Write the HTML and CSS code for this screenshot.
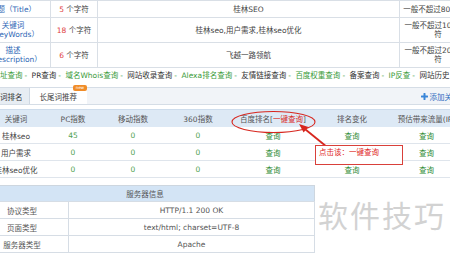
FILE: index.html
```html
<!DOCTYPE html>
<html lang="zh-CN">
<head>
    <meta charset="UTF-8" />
    <meta name="viewport" content="width=device-width, initial-scale=1.0" />
    <title>SEO综合查询</title>
    <link rel="stylesheet" href="styles.css">
</head>
<body>
    <div class="screen">
        <div class="page">
            <table class="meta">
                <colgroup>
                    <col style="width:75px"><col style="width:47px"><col style="width:302px"><col style="width:77px">
                </colgroup>
                <tr class="one">
                    <th>标题（Title）</th>
                    <td><em>5</em> 个字符</td>
                    <td>桂林SEO</td>
                    <td class="limit">一般不超过80个字符</td>
                </tr>
                <tr class="two">
                    <th>关键词<br>（KeyWords）</th>
                    <td><em>18</em> 个字符</td>
                    <td>桂林seo,用户需求,桂林seo优化</td>
                    <td class="limit">一般不超过100个字<br>符</td>
                </tr>
                <tr class="two">
                    <th>描述<br>（Description）</th>
                    <td><em>6</em> 个字符</td>
                    <td>飞越一路领航</td>
                    <td class="limit">一般不超过200个字<br>符</td>
                </tr>
            </table>

            <div class="links">
                <a class="green">地址查询</a><span class="sep">-</span>
                <a>PR查询</a><span class="sep">-</span>
                <a class="green">域名Whois查询</a><span class="sep">-</span>
                <a>网站收录查询</a><span class="sep">-</span>
                <a class="green">Alexa排名查询</a><span class="sep">-</span>
                <a>友情链接查询</a><span class="sep">-</span>
                <a class="green">百度权重查询</a><span class="sep">-</span>
                <a>备案查询</a><span class="sep">-</span>
                <a class="green">IP反查</a><span class="sep">-</span>
                <a>网站历史</a>
            </div>

            <div class="tabs">
                <span class="tab active">关键词排名</span>
                <span class="tab">长尾词推荐<i class="badge">new</i></span>
                <a class="add">
                    <svg width="7" height="7" viewBox="0 0 7 7"><path d="M3.5 0.8v5.4M0.8 3.5h5.4" stroke="#3a86d8" stroke-width="2" stroke-linecap="round"/></svg>添加关键词
                </a>
            </div>

            <table class="rank">
                <colgroup>
                    <col style="width:82px"><col style="width:32px"><col style="width:88px"><col style="width:42px"><col style="width:108px"><col style="width:50px"><col style="width:99px">
                </colgroup>
                <tr>
                    <th>关键词</th>
                    <th>PC指数</th>
                    <th>移动指数</th>
                    <th>360指数</th>
                    <th>百度排名[<span class="red">一键查询</span>]</th>
                    <th>排名变化</th>
                    <th>预估带来流量(IP)</th>
                </tr>
                <tr>
                    <td class="kw">桂林seo</td><td class="num">45</td><td class="num">0</td><td class="num">0</td>
                    <td class="q">查询</td><td class="q">查询</td><td class="q">查询</td>
                </tr>
                <tr>
                    <td class="kw">用户需求</td><td class="num">0</td><td class="num">0</td><td class="num">0</td>
                    <td class="q">查询</td><td class="q">查询</td><td class="q">查询</td>
                </tr>
                <tr>
                    <td class="kw">桂林seo优化</td><td class="num">0</td><td class="num">0</td><td class="num">0</td>
                    <td class="q">查询</td><td class="q">查询</td><td class="q">查询</td>
                </tr>
            </table>

            <table class="server">
                <colgroup>
                    <col style="width:93px"><col style="width:246px">
                </colgroup>
                <tr><th colspan="2">服务器信息</th></tr>
                <tr><td>协议类型</td><td>HTTP/1.1 200 OK</td></tr>
                <tr><td>页面类型</td><td>text/html; charset=UTF-8</td></tr>
                <tr><td>服务器类型</td><td>Apache</td></tr>
            </table>
        </div>

        <!-- annotation drawn over the screenshot -->
        <svg class="marks" width="450" height="253" viewBox="0 0 450 253">
            <ellipse cx="273.5" cy="122" rx="41.5" ry="10.5" fill="none" stroke="#d7261e" stroke-width="1.1"/>
            <line x1="327" y1="147" x2="305.5" y2="129.5" stroke="#d7261e" stroke-width="1.8"/>
            <polygon points="299,124 308.4,127 303.6,132.6" fill="#d7261e"/>
        </svg>
        <div class="callout">点击该：一键查询</div>
        <div class="watermark">软件技巧</div>
    </div>
</body>
</html>
```

FILE: styles.css
```css
body {
    margin: 0;
    font-family: "DejaVu Sans", "Noto Sans CJK SC", sans-serif;
    font-size: 7.5px;
    color: #444;
    background: #fff;
}

.screen {
    position: relative;
    width: 450px;
    height: 253px;
    overflow: hidden;
}

.page {
    margin-left: -25px;
    width: 501px;
}

table {
    border-collapse: collapse;
    table-layout: fixed;
}

/* title / keywords / description */
.meta {
    width: 501px;
    border-top: 1px solid #c4d4e6;
}

.meta th,
.meta td {
    border: 1px solid #d9dfe6;
    padding: 0 3px;
    text-align: center;
    line-height: 9px;
    font-weight: normal;
    color: #444;
}

.meta th {
    color: #2d66b5;
}

.meta .limit {
    white-space: nowrap;
}

.meta .one td,
.meta .one th {
    height: 16px;
}

.meta .two td,
.meta .two th {
    height: 24px;
}

.meta em {
    font-style: normal;
    color: #e0403f;
}

/* quick links */
.links {
    height: 16px;
    line-height: 16px;
    padding-left: 17.5px;
    white-space: nowrap;
    color: #333;
}

.links a {
    color: #333;
}

.links a.green {
    color: #3a9b3a;
}

.links .sep {
    margin: 0 2px;
    color: #3a9b3a;
}

/* tabs */
.tabs {
    margin-top: 3px;
    height: 16px;
    display: flex;
    align-items: stretch;
    background: #f1f4f8;
    border-top: 1px solid #d5dde6;
    border-bottom: 1px solid #d5dde6;
    padding-left: 4px;
}

.tab {
    position: relative;
    display: flex;
    align-items: center;
    padding: 0 10px;
    background: #fff;
    color: #444;
}

.tab.active {
    padding: 0 6px;
    background: #e7edf3;
    border-right: 1px solid #cfd8e2;
    color: #333;
}

.badge {
    position: absolute;
    right: 0;
    top: -3px;
    width: 14px;
    height: 6px;
    border-radius: 2px;
    background: #f08c28;
    color: #fff;
    font-style: normal;
    font-size: 4px;
    line-height: 6px;
    text-align: center;
    overflow: hidden;
}

.add {
    margin-left: auto;
    padding-right: 9px;
    display: flex;
    align-items: center;
    gap: 2px;
    color: #2f6cbf;
}

/* keyword ranking */
.rank {
    margin-top: 4px;
    width: 501px;
}

.rank th {
    height: 17px;
    padding: 0;
    background: #dde9f5;
    border-top: 1px solid #cddcec;
    font-weight: normal;
    color: #555;
    text-align: center;
    white-space: nowrap;
}

.rank td {
    height: 16px;
    padding: 0;
    border-bottom: 1px solid #dfe5ec;
    text-align: center;
    white-space: nowrap;
}

.rank .red {
    color: #d9261c;
}

.rank .kw {
    color: #444;
}

.rank .num {
    color: #4f9f4f;
}

.rank .q {
    color: #2e8b34;
}

/* server info */
.server {
    margin-top: 7px;
    width: 339px;
    border: 1px solid #cdd6df;
}

.server th {
    height: 15px;
    padding: 0;
    background: #d3e4f5;
    font-weight: normal;
    color: #555;
    text-align: center;
}

.server td {
    height: 16px;
    padding: 0;
    border: 1px solid #d6dde5;
    text-align: center;
    color: #555;
}

/* overlays */
.marks {
    position: absolute;
    left: 0;
    top: 0;
    pointer-events: none;
}

.callout {
    position: absolute;
    left: 315px;
    top: 145px;
    width: 88px;
    height: 20px;
    padding: 2px 0 0 3px;
    box-sizing: border-box;
    background: #fff;
    border: 1px solid #d9403a;
    color: #e0241c;
    line-height: 10px;
}

.watermark {
    position: absolute;
    left: 318px;
    top: 196px;
    font-family: "Noto Sans CJK SC", sans-serif;
    font-size: 30px;
    letter-spacing: 2px;
    line-height: 36px;
    color: #d2d2d2;
}
```
